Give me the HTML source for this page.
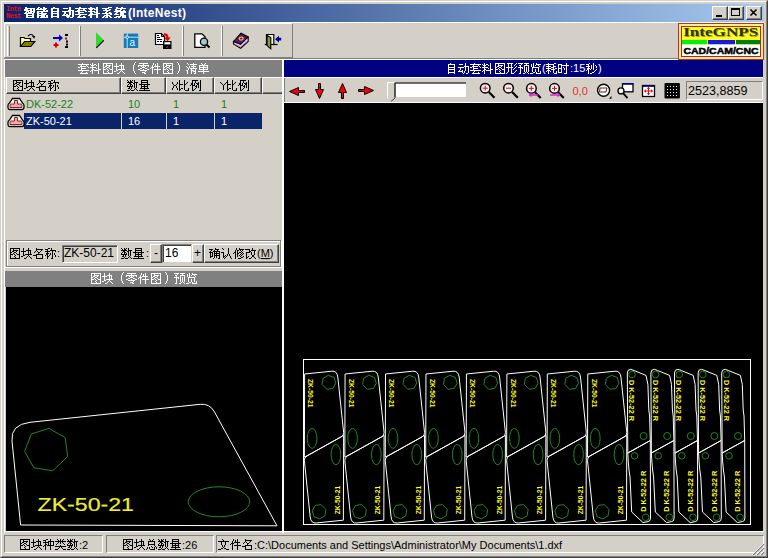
<!DOCTYPE html>
<html><head><meta charset="utf-8">
<style>
*{box-sizing:border-box;margin:0;padding:0}
html,body{width:768px;height:558px;overflow:hidden;background:#D4D0C8}
body{position:relative;font-family:"Liberation Sans",sans-serif;font-size:12px;color:#000}
.a{position:absolute}
.raised{border-top:1px solid #fff;border-left:1px solid #fff;border-right:1px solid #404040;border-bottom:1px solid #404040;box-shadow:inset -1px -1px 0 #808080}
.sunk{border-top:1px solid #808080;border-left:1px solid #808080;border-right:1px solid #fff;border-bottom:1px solid #fff;box-shadow:inset 1px 1px 0 #404040}
.t{white-space:nowrap;line-height:1}
svg{position:absolute;overflow:visible}
</style></head><body>
<!-- window frame -->
<div class="a" style="left:0;top:0;width:768px;height:558px;border-top:1px solid #D4D0C8;border-left:1px solid #D4D0C8;border-right:1px solid #404040;border-bottom:1px solid #404040;"></div>
<div class="a" style="left:1px;top:1px;width:766px;height:556px;border-top:1px solid #fff;border-left:1px solid #fff;border-right:1px solid #808080;border-bottom:1px solid #808080;"></div>

<!-- title bar -->
<div class="a" style="left:4px;top:4px;width:760px;height:18px;background:linear-gradient(to right,#0A246A,#A6CAF0)"></div>
<div class="a t" style="left:6px;top:6px;width:17px;height:14px;color:#E01020;font-family:'Liberation Mono',monospace;font-size:7px;line-height:7px;font-weight:bold;letter-spacing:-0.5px">Inte<br>Nest</div>
<div class="a raised" style="left:712px;top:6px;width:16px;height:14px;background:#D4D0C8"></div>
<div class="a" style="left:716px;top:15px;width:6px;height:2px;background:#000"></div>
<div class="a raised" style="left:728px;top:6px;width:16px;height:14px;background:#D4D0C8"></div>
<div class="a" style="left:731px;top:8px;width:9px;height:8px;border:1px solid #000;border-top-width:2px"></div>
<div class="a raised" style="left:746px;top:6px;width:16px;height:14px;background:#D4D0C8"></div>
<svg style="left:746px;top:6px" width="16" height="14"><path d="M4.5 3.5 L10.5 9.5 M10.5 3.5 L4.5 9.5" stroke="#000" stroke-width="1.6"/></svg>

<!-- toolbar -->
<div class="a" style="left:4px;top:22px;width:760px;height:1px;background:#fff"></div>
<div class="a" style="left:4px;top:23px;width:289px;height:35px;border-top:1px solid #fff;border-left:1px solid #fff;border-right:1px solid #808080;border-bottom:1px solid #808080"></div>
<div class="a" style="left:7px;top:26px;width:3px;height:30px;border-left:1px solid #fff;border-right:1px solid #808080"></div>
<div class="a" style="left:79px;top:26px;width:2px;height:30px;border-left:1px solid #fff;border-right:1px solid #808080"></div>
<div class="a" style="left:182px;top:26px;width:2px;height:30px;border-left:1px solid #fff;border-right:1px solid #808080"></div>
<div class="a" style="left:221px;top:26px;width:2px;height:30px;border-left:1px solid #fff;border-right:1px solid #808080"></div>
<div class="a" style="left:4px;top:58px;width:760px;height:1px;background:#808080"></div>
<div class="a" style="left:4px;top:59px;width:760px;height:1px;background:#fff"></div>
<div class="a" style="left:4px;top:59px;width:1px;height:474px;background:#fff"></div>

<!-- logo -->
<svg style="left:678px;top:23px" width="86" height="37" viewBox="0 0 86 37">
<rect x="0" y="0" width="86" height="37" fill="#FFF0A0"/>
<rect x="0.5" y="0.5" width="85" height="36" fill="none" stroke="#C83010" stroke-width="1"/>
<rect x="3.5" y="3.5" width="79" height="30" fill="#FFFF28" stroke="#C02010" stroke-width="1"/>
<text x="6" y="13.8" textLength="75" lengthAdjust="spacingAndGlyphs" style="font-family:'Liberation Serif',serif;font-weight:bold;font-size:11.5px;fill:#A0A000">InteGNPS</text>
<text x="5.2" y="13" textLength="75" lengthAdjust="spacingAndGlyphs" style="font-family:'Liberation Serif',serif;font-weight:bold;font-size:11.5px;fill:#303000">InteGNPS</text>
<rect x="4" y="17" width="25" height="4.5" fill="#00F000"/>
<rect x="30" y="17" width="27" height="4.5" fill="#1818E0"/>
<rect x="58" y="17" width="24" height="4.5" fill="#008000"/>
<rect x="4" y="21.5" width="78" height="11.5" fill="#fff"/>
<text x="5.5" y="31.3" textLength="75" lengthAdjust="spacingAndGlyphs" style="font-family:'Liberation Sans',sans-serif;font-weight:bold;font-size:9.6px;fill:#000;stroke:#000;stroke-width:0.5px">CAD/CAM/CNC</text>
</svg>
<!-- LEFT PANEL -->
<div class="a" style="left:5px;top:60px;width:277px;height:17px;background:#808080"></div>


<!-- list header -->
<div class="a" style="left:6px;top:77px;width:115px;height:17px;border-top:1px solid #fff;border-left:1px solid #fff;border-right:1px solid #404040;border-bottom:1px solid #404040;box-shadow:inset -1px -1px 0 #808080"></div>
<div class="a" style="left:121px;top:77px;width:45px;height:17px;border-top:1px solid #fff;border-left:1px solid #fff;border-right:1px solid #404040;border-bottom:1px solid #404040;box-shadow:inset -1px -1px 0 #808080"></div>
<div class="a" style="left:166px;top:77px;width:48px;height:17px;border-top:1px solid #fff;border-left:1px solid #fff;border-right:1px solid #404040;border-bottom:1px solid #404040;box-shadow:inset -1px -1px 0 #808080"></div>
<div class="a" style="left:214px;top:77px;width:48px;height:17px;border-top:1px solid #fff;border-left:1px solid #fff;border-right:1px solid #404040;border-bottom:1px solid #404040;box-shadow:inset -1px -1px 0 #808080"></div>
<div class="a" style="left:262px;top:77px;width:20px;height:17px;border-top:1px solid #fff;border-left:1px solid #fff;border-bottom:1px solid #404040;box-shadow:inset 0 -1px 0 #808080"></div>
<!-- rows -->
<div class="a t" style="left:26px;top:98px;line-height:13px;color:#208020;font-size:11px">DK-52-22</div>
<div class="a t" style="left:128px;top:98px;line-height:13px;color:#208020;font-size:11px">10</div>
<div class="a t" style="left:173px;top:98px;line-height:13px;color:#208020;font-size:11px">1</div>
<div class="a t" style="left:221px;top:98px;line-height:13px;color:#208020;font-size:11px">1</div>
<div class="a" style="left:24px;top:113px;width:97px;height:16px;background:#0A246A"></div>
<div class="a" style="left:122px;top:113px;width:44px;height:16px;background:#0A246A"></div>
<div class="a" style="left:167px;top:113px;width:47px;height:16px;background:#0A246A"></div>
<div class="a" style="left:215px;top:113px;width:47px;height:16px;background:#0A246A"></div>
<div class="a t" style="left:26px;top:115px;line-height:13px;color:#fff;font-size:11px">ZK-50-21</div>
<div class="a t" style="left:128px;top:115px;line-height:13px;color:#fff;font-size:11px">16</div>
<div class="a t" style="left:173px;top:115px;line-height:13px;color:#fff;font-size:11px">1</div>
<div class="a t" style="left:221px;top:115px;line-height:13px;color:#fff;font-size:11px">1</div>
<svg style="left:7px;top:97px" width="18" height="14"><path d="M5.5 1.5 H12.5 L15.5 6 Q17 6.8 17 8.8 V10 Q17 12.5 15 12.5 H3 Q1 12.5 1 10 V8.8 Q1 6.8 2.5 6 Z" fill="#fff" stroke="#000" stroke-width="1.3"/><path d="M7.5 3.5 H10.5 V7 H14.5 Q15 7.5 15 9 V10.5 H3 V9 Q3 7.5 3.5 7 H7.5 Z" fill="#F4A8A8" stroke="#600000" stroke-width="0.8"/></svg>
<svg style="left:7px;top:114px" width="18" height="14"><path d="M5.5 1.5 H12.5 L15.5 6 Q17 6.8 17 8.8 V10 Q17 12.5 15 12.5 H3 Q1 12.5 1 10 V8.8 Q1 6.8 2.5 6 Z" fill="#fff" stroke="#000" stroke-width="1.3"/><path d="M7.5 3.5 H10.5 V7 H14.5 Q15 7.5 15 9 V10.5 H3 V9 Q3 7.5 3.5 7 H7.5 Z" fill="#F4A8A8" stroke="#600000" stroke-width="0.8"/></svg>

<!-- form row -->
<div class="a" style="left:7px;top:241px;width:275px;height:27px;border:1px solid #fff"></div>
<div class="a" style="left:6px;top:240px;width:275px;height:27px;border:1px solid #808080"></div>
<div class="a" style="left:62px;top:245px;width:56px;height:18px;border-top:1px solid #808080;border-left:1px solid #808080;border-right:1px solid #fff;border-bottom:1px solid #fff;box-shadow:inset 1px 1px 0 #404040"></div>
<div class="a t" style="left:64px;top:247px;line-height:13px;font-size:12px">ZK-50-21</div>
<div class="a raised" style="left:150px;top:244px;width:12px;height:19px;background:#D4D0C8"></div>
<div class="a t" style="left:154px;top:247px;line-height:13px">-</div>
<div class="a" style="left:162px;top:244px;width:30px;height:19px;background:#fff;border-top:1px solid #808080;border-left:1px solid #808080;border-right:1px solid #D4D0C8;border-bottom:1px solid #D4D0C8;box-shadow:inset 1px 1px 0 #404040"></div>
<div class="a t" style="left:165px;top:247px;line-height:13px;font-size:12px">16</div>
<div class="a raised" style="left:192px;top:244px;width:12px;height:19px;background:#D4D0C8"></div>
<div class="a t" style="left:194px;top:247px;line-height:13px">+</div>
<div class="a raised" style="left:204px;top:244px;width:75px;height:19px;background:#D4D0C8"></div>


<!-- RIGHT PANEL -->
<div class="a" style="left:282px;top:59px;width:2px;height:474px;background:#fff"></div>
<div class="a" style="left:284px;top:60px;width:479px;height:17px;background:#000080"></div>
<div class="a" style="left:284px;top:77px;width:479px;height:1px;background:#fff"></div>
<div class="a" style="left:284px;top:102px;width:479px;height:1px;background:#fff"></div>
<div class="a" style="left:284px;top:103px;width:479px;height:428px;background:#000"></div>

<!-- left preview -->
<div class="a" style="left:5px;top:267px;width:277px;height:1px;background:#fff"></div>
<div class="a" style="left:5px;top:271px;width:277px;height:16px;background:#808080"></div>
<div class="a" style="left:6px;top:287px;width:276px;height:244px;background:#000"></div>


<svg style="left:0;top:0" width="768" height="558" viewBox="0 0 768 558">
<style>.nt{font-family:"Liberation Sans",sans-serif;font-weight:bold;font-size:7.2px;fill:#FFFF20;text-anchor:middle;dominant-baseline:central}</style>
<path d="M20.6 525 L12 441 Q10.3 424.7 30 422.3 L200.2 404.3 Q209.7 403.3 214.5 412 L277 525.8 Z" fill="none" stroke="#fff" stroke-width="1"/>
<path d="M48.9 428.4 L65.2 437.6 L67.7 456.5 L52.7 470.8 L33.9 467.8 L24.6 451.4 L31.4 433.9 Z" fill="none" stroke="#1E8A1E" stroke-width="1"/>
<ellipse cx="219" cy="501.8" rx="30.7" ry="15" fill="none" stroke="#1E8A1E" stroke-width="1"/>
<text x="37.5" y="510.9" textLength="96.5" lengthAdjust="spacingAndGlyphs" style="font-family:'Liberation Sans',sans-serif;font-size:19.2px;fill:#F0F028;stroke:#F0F028;stroke-width:0.15px">ZK-50-21</text>
<rect x="303.5" y="359.5" width="447" height="165" fill="none" stroke="#fff" stroke-width="1"/>
<g transform="matrix(0,0.3245,-0.323,0,474.20,367.31)"><path d="M20.6 525 L12 441 Q10.3 424.7 30 422.3 L200.2 404.3 Q209.7 403.3 214.5 412 L277 525.8 Z" fill="none" stroke="#fff" stroke-width="1" vector-effect="non-scaling-stroke"/><path d="M48.9 428.4 L65.2 437.6 L67.7 456.5 L52.7 470.8 L33.9 467.8 L24.6 451.4 L31.4 433.9 Z" fill="none" stroke="#1E8A1E" stroke-width="1" vector-effect="non-scaling-stroke"/><ellipse cx="219" cy="501.8" rx="30.7" ry="15" fill="none" stroke="#1E8A1E" stroke-width="1" vector-effect="non-scaling-stroke"/></g>
<g transform="matrix(0,-0.3306,0.323,0,173.80,526.97)"><path d="M20.6 525 L12 441 Q10.3 424.7 30 422.3 L200.2 404.3 Q209.7 403.3 214.5 412 L277 525.8 Z" fill="none" stroke="#fff" stroke-width="1" vector-effect="non-scaling-stroke"/><path d="M48.9 428.4 L65.2 437.6 L67.7 456.5 L52.7 470.8 L33.9 467.8 L24.6 451.4 L31.4 433.9 Z" fill="none" stroke="#1E8A1E" stroke-width="1" vector-effect="non-scaling-stroke"/><ellipse cx="219" cy="501.8" rx="30.7" ry="15" fill="none" stroke="#1E8A1E" stroke-width="1" vector-effect="non-scaling-stroke"/></g>
<text transform="translate(310.90,393.2) rotate(90)" class="nt" textLength="28.5" lengthAdjust="spacingAndGlyphs">ZK-50-21</text>
<text transform="translate(337.30,500) rotate(-90)" class="nt" textLength="28.5" lengthAdjust="spacingAndGlyphs">ZK-50-21</text>
<g transform="matrix(0,0.3245,-0.323,0,514.65,367.31)"><path d="M20.6 525 L12 441 Q10.3 424.7 30 422.3 L200.2 404.3 Q209.7 403.3 214.5 412 L277 525.8 Z" fill="none" stroke="#fff" stroke-width="1" vector-effect="non-scaling-stroke"/><path d="M48.9 428.4 L65.2 437.6 L67.7 456.5 L52.7 470.8 L33.9 467.8 L24.6 451.4 L31.4 433.9 Z" fill="none" stroke="#1E8A1E" stroke-width="1" vector-effect="non-scaling-stroke"/><ellipse cx="219" cy="501.8" rx="30.7" ry="15" fill="none" stroke="#1E8A1E" stroke-width="1" vector-effect="non-scaling-stroke"/></g>
<g transform="matrix(0,-0.3306,0.323,0,214.25,526.97)"><path d="M20.6 525 L12 441 Q10.3 424.7 30 422.3 L200.2 404.3 Q209.7 403.3 214.5 412 L277 525.8 Z" fill="none" stroke="#fff" stroke-width="1" vector-effect="non-scaling-stroke"/><path d="M48.9 428.4 L65.2 437.6 L67.7 456.5 L52.7 470.8 L33.9 467.8 L24.6 451.4 L31.4 433.9 Z" fill="none" stroke="#1E8A1E" stroke-width="1" vector-effect="non-scaling-stroke"/><ellipse cx="219" cy="501.8" rx="30.7" ry="15" fill="none" stroke="#1E8A1E" stroke-width="1" vector-effect="non-scaling-stroke"/></g>
<text transform="translate(351.35,393.2) rotate(90)" class="nt" textLength="28.5" lengthAdjust="spacingAndGlyphs">ZK-50-21</text>
<text transform="translate(377.75,500) rotate(-90)" class="nt" textLength="28.5" lengthAdjust="spacingAndGlyphs">ZK-50-21</text>
<g transform="matrix(0,0.3245,-0.323,0,555.10,367.31)"><path d="M20.6 525 L12 441 Q10.3 424.7 30 422.3 L200.2 404.3 Q209.7 403.3 214.5 412 L277 525.8 Z" fill="none" stroke="#fff" stroke-width="1" vector-effect="non-scaling-stroke"/><path d="M48.9 428.4 L65.2 437.6 L67.7 456.5 L52.7 470.8 L33.9 467.8 L24.6 451.4 L31.4 433.9 Z" fill="none" stroke="#1E8A1E" stroke-width="1" vector-effect="non-scaling-stroke"/><ellipse cx="219" cy="501.8" rx="30.7" ry="15" fill="none" stroke="#1E8A1E" stroke-width="1" vector-effect="non-scaling-stroke"/></g>
<g transform="matrix(0,-0.3306,0.323,0,254.70,526.97)"><path d="M20.6 525 L12 441 Q10.3 424.7 30 422.3 L200.2 404.3 Q209.7 403.3 214.5 412 L277 525.8 Z" fill="none" stroke="#fff" stroke-width="1" vector-effect="non-scaling-stroke"/><path d="M48.9 428.4 L65.2 437.6 L67.7 456.5 L52.7 470.8 L33.9 467.8 L24.6 451.4 L31.4 433.9 Z" fill="none" stroke="#1E8A1E" stroke-width="1" vector-effect="non-scaling-stroke"/><ellipse cx="219" cy="501.8" rx="30.7" ry="15" fill="none" stroke="#1E8A1E" stroke-width="1" vector-effect="non-scaling-stroke"/></g>
<text transform="translate(391.80,393.2) rotate(90)" class="nt" textLength="28.5" lengthAdjust="spacingAndGlyphs">ZK-50-21</text>
<text transform="translate(418.20,500) rotate(-90)" class="nt" textLength="28.5" lengthAdjust="spacingAndGlyphs">ZK-50-21</text>
<g transform="matrix(0,0.3245,-0.323,0,595.55,367.31)"><path d="M20.6 525 L12 441 Q10.3 424.7 30 422.3 L200.2 404.3 Q209.7 403.3 214.5 412 L277 525.8 Z" fill="none" stroke="#fff" stroke-width="1" vector-effect="non-scaling-stroke"/><path d="M48.9 428.4 L65.2 437.6 L67.7 456.5 L52.7 470.8 L33.9 467.8 L24.6 451.4 L31.4 433.9 Z" fill="none" stroke="#1E8A1E" stroke-width="1" vector-effect="non-scaling-stroke"/><ellipse cx="219" cy="501.8" rx="30.7" ry="15" fill="none" stroke="#1E8A1E" stroke-width="1" vector-effect="non-scaling-stroke"/></g>
<g transform="matrix(0,-0.3306,0.323,0,295.15,526.97)"><path d="M20.6 525 L12 441 Q10.3 424.7 30 422.3 L200.2 404.3 Q209.7 403.3 214.5 412 L277 525.8 Z" fill="none" stroke="#fff" stroke-width="1" vector-effect="non-scaling-stroke"/><path d="M48.9 428.4 L65.2 437.6 L67.7 456.5 L52.7 470.8 L33.9 467.8 L24.6 451.4 L31.4 433.9 Z" fill="none" stroke="#1E8A1E" stroke-width="1" vector-effect="non-scaling-stroke"/><ellipse cx="219" cy="501.8" rx="30.7" ry="15" fill="none" stroke="#1E8A1E" stroke-width="1" vector-effect="non-scaling-stroke"/></g>
<text transform="translate(432.25,393.2) rotate(90)" class="nt" textLength="28.5" lengthAdjust="spacingAndGlyphs">ZK-50-21</text>
<text transform="translate(458.65,500) rotate(-90)" class="nt" textLength="28.5" lengthAdjust="spacingAndGlyphs">ZK-50-21</text>
<g transform="matrix(0,0.3245,-0.323,0,636.00,367.31)"><path d="M20.6 525 L12 441 Q10.3 424.7 30 422.3 L200.2 404.3 Q209.7 403.3 214.5 412 L277 525.8 Z" fill="none" stroke="#fff" stroke-width="1" vector-effect="non-scaling-stroke"/><path d="M48.9 428.4 L65.2 437.6 L67.7 456.5 L52.7 470.8 L33.9 467.8 L24.6 451.4 L31.4 433.9 Z" fill="none" stroke="#1E8A1E" stroke-width="1" vector-effect="non-scaling-stroke"/><ellipse cx="219" cy="501.8" rx="30.7" ry="15" fill="none" stroke="#1E8A1E" stroke-width="1" vector-effect="non-scaling-stroke"/></g>
<g transform="matrix(0,-0.3306,0.323,0,335.60,526.97)"><path d="M20.6 525 L12 441 Q10.3 424.7 30 422.3 L200.2 404.3 Q209.7 403.3 214.5 412 L277 525.8 Z" fill="none" stroke="#fff" stroke-width="1" vector-effect="non-scaling-stroke"/><path d="M48.9 428.4 L65.2 437.6 L67.7 456.5 L52.7 470.8 L33.9 467.8 L24.6 451.4 L31.4 433.9 Z" fill="none" stroke="#1E8A1E" stroke-width="1" vector-effect="non-scaling-stroke"/><ellipse cx="219" cy="501.8" rx="30.7" ry="15" fill="none" stroke="#1E8A1E" stroke-width="1" vector-effect="non-scaling-stroke"/></g>
<text transform="translate(472.70,393.2) rotate(90)" class="nt" textLength="28.5" lengthAdjust="spacingAndGlyphs">ZK-50-21</text>
<text transform="translate(499.10,500) rotate(-90)" class="nt" textLength="28.5" lengthAdjust="spacingAndGlyphs">ZK-50-21</text>
<g transform="matrix(0,0.3245,-0.323,0,676.45,367.31)"><path d="M20.6 525 L12 441 Q10.3 424.7 30 422.3 L200.2 404.3 Q209.7 403.3 214.5 412 L277 525.8 Z" fill="none" stroke="#fff" stroke-width="1" vector-effect="non-scaling-stroke"/><path d="M48.9 428.4 L65.2 437.6 L67.7 456.5 L52.7 470.8 L33.9 467.8 L24.6 451.4 L31.4 433.9 Z" fill="none" stroke="#1E8A1E" stroke-width="1" vector-effect="non-scaling-stroke"/><ellipse cx="219" cy="501.8" rx="30.7" ry="15" fill="none" stroke="#1E8A1E" stroke-width="1" vector-effect="non-scaling-stroke"/></g>
<g transform="matrix(0,-0.3306,0.323,0,376.05,526.97)"><path d="M20.6 525 L12 441 Q10.3 424.7 30 422.3 L200.2 404.3 Q209.7 403.3 214.5 412 L277 525.8 Z" fill="none" stroke="#fff" stroke-width="1" vector-effect="non-scaling-stroke"/><path d="M48.9 428.4 L65.2 437.6 L67.7 456.5 L52.7 470.8 L33.9 467.8 L24.6 451.4 L31.4 433.9 Z" fill="none" stroke="#1E8A1E" stroke-width="1" vector-effect="non-scaling-stroke"/><ellipse cx="219" cy="501.8" rx="30.7" ry="15" fill="none" stroke="#1E8A1E" stroke-width="1" vector-effect="non-scaling-stroke"/></g>
<text transform="translate(513.15,393.2) rotate(90)" class="nt" textLength="28.5" lengthAdjust="spacingAndGlyphs">ZK-50-21</text>
<text transform="translate(539.55,500) rotate(-90)" class="nt" textLength="28.5" lengthAdjust="spacingAndGlyphs">ZK-50-21</text>
<g transform="matrix(0,0.3245,-0.323,0,716.90,367.31)"><path d="M20.6 525 L12 441 Q10.3 424.7 30 422.3 L200.2 404.3 Q209.7 403.3 214.5 412 L277 525.8 Z" fill="none" stroke="#fff" stroke-width="1" vector-effect="non-scaling-stroke"/><path d="M48.9 428.4 L65.2 437.6 L67.7 456.5 L52.7 470.8 L33.9 467.8 L24.6 451.4 L31.4 433.9 Z" fill="none" stroke="#1E8A1E" stroke-width="1" vector-effect="non-scaling-stroke"/><ellipse cx="219" cy="501.8" rx="30.7" ry="15" fill="none" stroke="#1E8A1E" stroke-width="1" vector-effect="non-scaling-stroke"/></g>
<g transform="matrix(0,-0.3306,0.323,0,416.50,526.97)"><path d="M20.6 525 L12 441 Q10.3 424.7 30 422.3 L200.2 404.3 Q209.7 403.3 214.5 412 L277 525.8 Z" fill="none" stroke="#fff" stroke-width="1" vector-effect="non-scaling-stroke"/><path d="M48.9 428.4 L65.2 437.6 L67.7 456.5 L52.7 470.8 L33.9 467.8 L24.6 451.4 L31.4 433.9 Z" fill="none" stroke="#1E8A1E" stroke-width="1" vector-effect="non-scaling-stroke"/><ellipse cx="219" cy="501.8" rx="30.7" ry="15" fill="none" stroke="#1E8A1E" stroke-width="1" vector-effect="non-scaling-stroke"/></g>
<text transform="translate(553.60,393.2) rotate(90)" class="nt" textLength="28.5" lengthAdjust="spacingAndGlyphs">ZK-50-21</text>
<text transform="translate(580.00,500) rotate(-90)" class="nt" textLength="28.5" lengthAdjust="spacingAndGlyphs">ZK-50-21</text>
<g transform="matrix(0,0.3245,-0.323,0,757.35,367.31)"><path d="M20.6 525 L12 441 Q10.3 424.7 30 422.3 L200.2 404.3 Q209.7 403.3 214.5 412 L277 525.8 Z" fill="none" stroke="#fff" stroke-width="1" vector-effect="non-scaling-stroke"/><path d="M48.9 428.4 L65.2 437.6 L67.7 456.5 L52.7 470.8 L33.9 467.8 L24.6 451.4 L31.4 433.9 Z" fill="none" stroke="#1E8A1E" stroke-width="1" vector-effect="non-scaling-stroke"/><ellipse cx="219" cy="501.8" rx="30.7" ry="15" fill="none" stroke="#1E8A1E" stroke-width="1" vector-effect="non-scaling-stroke"/></g>
<g transform="matrix(0,-0.3306,0.323,0,456.95,526.97)"><path d="M20.6 525 L12 441 Q10.3 424.7 30 422.3 L200.2 404.3 Q209.7 403.3 214.5 412 L277 525.8 Z" fill="none" stroke="#fff" stroke-width="1" vector-effect="non-scaling-stroke"/><path d="M48.9 428.4 L65.2 437.6 L67.7 456.5 L52.7 470.8 L33.9 467.8 L24.6 451.4 L31.4 433.9 Z" fill="none" stroke="#1E8A1E" stroke-width="1" vector-effect="non-scaling-stroke"/><ellipse cx="219" cy="501.8" rx="30.7" ry="15" fill="none" stroke="#1E8A1E" stroke-width="1" vector-effect="non-scaling-stroke"/></g>
<text transform="translate(594.05,393.2) rotate(90)" class="nt" textLength="28.5" lengthAdjust="spacingAndGlyphs">ZK-50-21</text>
<text transform="translate(620.45,500) rotate(-90)" class="nt" textLength="28.5" lengthAdjust="spacingAndGlyphs">ZK-50-21</text>
<path d="M627.3 373 Q627.3 369.3 630.8 369.3 L634.0 370.5 L646.0 375.4 L647.9 384.4 L648.8 410 L649.6 416 L650.3 440.5 L627.8 453.0 Z" fill="none" stroke="#fff" stroke-width="1"/><path d="M627.8 453.0 L650.3 440.5 L650.5 518 Q650.5 521.4 648.0 521.6 L643.0 522.6 L631.7 512 L630.0 477 L629.0 470 L628.3 462 Z" fill="none" stroke="#fff" stroke-width="1"/>
<circle cx="632.0" cy="374.5" r="3.3" fill="none" stroke="#1E8A1E"/><circle cx="643.6" cy="436" r="3.5" fill="none" stroke="#1E8A1E"/>
<circle cx="634.6" cy="455.8" r="3.3" fill="none" stroke="#1E8A1E"/><circle cx="645.7" cy="517.3" r="3.3" fill="none" stroke="#1E8A1E"/>
<text transform="translate(631.70,400.5) rotate(90)" class="nt" textLength="41" lengthAdjust="spacingAndGlyphs">D K-52-22 R</text>
<text transform="translate(643.30,491.3) rotate(-90)" class="nt" textLength="41" lengthAdjust="spacingAndGlyphs">D K-52-22 R</text>
<path d="M650.9 373 Q650.9 369.3 654.4 369.3 L657.6 370.5 L669.6 375.4 L671.5 384.4 L672.4 410 L673.2 416 L673.9 440.5 L651.4 453.0 Z" fill="none" stroke="#fff" stroke-width="1"/><path d="M651.4 453.0 L673.9 440.5 L674.1 518 Q674.1 521.4 671.6 521.6 L666.6 522.6 L655.3 512 L653.6 477 L652.6 470 L651.9 462 Z" fill="none" stroke="#fff" stroke-width="1"/>
<circle cx="655.6" cy="374.5" r="3.3" fill="none" stroke="#1E8A1E"/><circle cx="667.2" cy="436" r="3.5" fill="none" stroke="#1E8A1E"/>
<circle cx="658.2" cy="455.8" r="3.3" fill="none" stroke="#1E8A1E"/><circle cx="669.3" cy="517.3" r="3.3" fill="none" stroke="#1E8A1E"/>
<text transform="translate(655.30,400.5) rotate(90)" class="nt" textLength="41" lengthAdjust="spacingAndGlyphs">D K-52-22 R</text>
<text transform="translate(666.90,491.3) rotate(-90)" class="nt" textLength="41" lengthAdjust="spacingAndGlyphs">D K-52-22 R</text>
<path d="M674.5 373 Q674.5 369.3 678.0 369.3 L681.2 370.5 L693.2 375.4 L695.1 384.4 L696.0 410 L696.8 416 L697.5 440.5 L675.0 453.0 Z" fill="none" stroke="#fff" stroke-width="1"/><path d="M675.0 453.0 L697.5 440.5 L697.7 518 Q697.7 521.4 695.2 521.6 L690.2 522.6 L678.9 512 L677.2 477 L676.2 470 L675.5 462 Z" fill="none" stroke="#fff" stroke-width="1"/>
<circle cx="679.2" cy="374.5" r="3.3" fill="none" stroke="#1E8A1E"/><circle cx="690.8" cy="436" r="3.5" fill="none" stroke="#1E8A1E"/>
<circle cx="681.8" cy="455.8" r="3.3" fill="none" stroke="#1E8A1E"/><circle cx="692.9" cy="517.3" r="3.3" fill="none" stroke="#1E8A1E"/>
<text transform="translate(678.90,400.5) rotate(90)" class="nt" textLength="41" lengthAdjust="spacingAndGlyphs">D K-52-22 R</text>
<text transform="translate(690.50,491.3) rotate(-90)" class="nt" textLength="41" lengthAdjust="spacingAndGlyphs">D K-52-22 R</text>
<path d="M698.1 373 Q698.1 369.3 701.6 369.3 L704.8 370.5 L716.8 375.4 L718.7 384.4 L719.6 410 L720.4 416 L721.1 440.5 L698.6 453.0 Z" fill="none" stroke="#fff" stroke-width="1"/><path d="M698.6 453.0 L721.1 440.5 L721.3 518 Q721.3 521.4 718.8 521.6 L713.8 522.6 L702.5 512 L700.8 477 L699.8 470 L699.1 462 Z" fill="none" stroke="#fff" stroke-width="1"/>
<circle cx="702.8" cy="374.5" r="3.3" fill="none" stroke="#1E8A1E"/><circle cx="714.4" cy="436" r="3.5" fill="none" stroke="#1E8A1E"/>
<circle cx="705.4" cy="455.8" r="3.3" fill="none" stroke="#1E8A1E"/><circle cx="716.5" cy="517.3" r="3.3" fill="none" stroke="#1E8A1E"/>
<text transform="translate(702.50,400.5) rotate(90)" class="nt" textLength="41" lengthAdjust="spacingAndGlyphs">D K-52-22 R</text>
<text transform="translate(714.10,491.3) rotate(-90)" class="nt" textLength="41" lengthAdjust="spacingAndGlyphs">D K-52-22 R</text>
<path d="M721.7 373 Q721.7 369.3 725.2 369.3 L728.4 370.5 L740.4 375.4 L742.3 384.4 L743.2 410 L744.0 416 L744.7 440.5 L722.2 453.0 Z" fill="none" stroke="#fff" stroke-width="1"/><path d="M722.2 453.0 L744.7 440.5 L744.9 518 Q744.9 521.4 742.4 521.6 L737.4 522.6 L726.1 512 L724.4 477 L723.4 470 L722.7 462 Z" fill="none" stroke="#fff" stroke-width="1"/>
<circle cx="726.4" cy="374.5" r="3.3" fill="none" stroke="#1E8A1E"/><circle cx="738.0" cy="436" r="3.5" fill="none" stroke="#1E8A1E"/>
<circle cx="729.0" cy="455.8" r="3.3" fill="none" stroke="#1E8A1E"/><circle cx="740.1" cy="517.3" r="3.3" fill="none" stroke="#1E8A1E"/>
<text transform="translate(726.10,400.5) rotate(90)" class="nt" textLength="41" lengthAdjust="spacingAndGlyphs">D K-52-22 R</text>
<text transform="translate(737.70,491.3) rotate(-90)" class="nt" textLength="41" lengthAdjust="spacingAndGlyphs">D K-52-22 R</text>
</svg>


<svg style="left:0;top:0" width="768" height="110" viewBox="0 0 768 110">
<!-- open folder -->
<path d="M20.5 46.5 V37.5 H24 L25 38.5 H30.5 V41.5" fill="#FFFF99" stroke="#000" stroke-width="1.2"/>
<path d="M20.5 46.5 L24.5 41.5 H34.8 L30.8 46.5 Z" fill="#808000" stroke="#000" stroke-width="1.2"/>
<path d="M28 36.2 Q30.5 33 33.5 35.8" fill="none" stroke="#000" stroke-width="1.1"/>
<path d="M32 36 L35.2 36 L34.2 38.8 Z" fill="#000"/>
<!-- merge -->
<rect x="53" y="37" width="7" height="2" fill="#0000C8"/>
<path d="M59 34.5 L63 38 L59 41.5 Z" fill="#0000C8"/>
<rect x="53.5" y="44" width="5" height="2" fill="#E00000"/><rect x="55" y="42.5" width="2" height="5" fill="#E00000"/>
<rect x="65" y="34" width="3" height="2" fill="#000"/><rect x="65" y="37.5" width="2" height="2" fill="#802020"/>
<rect x="66" y="40.5" width="2" height="2" fill="#000"/><rect x="66" y="43.5" width="2" height="2" fill="#000"/>
<rect x="65" y="46" width="3" height="2" fill="#000"/>
<!-- play -->
<path d="M96 32.3 L104 40.3 L96 48 Z" fill="#30DC30"/>
<path d="M96.3 47.8 L103.8 40.3" stroke="#000" stroke-width="1.2"/>
<!-- blue a -->
<rect x="123.8" y="33.6" width="14.4" height="14.4" fill="#1878B8"/>
<path d="M127.2 33.6 V48 M123.8 37.2 H138.2" stroke="#A0F0FF" stroke-width="1"/>
<circle cx="127.2" cy="37.2" r="1.3" fill="#1878B8" stroke="#E0FFFF" stroke-width="0.9"/>
<text x="129.6" y="46.3" style="font-family:'Liberation Sans',sans-serif;font-size:10px;fill:#E8F8FF">a</text>
<!-- save -->
<path d="M155.5 33.5 H161.5 L164.5 36.5 V44.5 H155.5 Z" fill="#fff" stroke="#000" stroke-width="1.2"/>
<path d="M161.5 33.5 V36.5 H164.5" fill="none" stroke="#000" stroke-width="1"/>
<g fill="#000"><rect x="157" y="35" width="2" height="1"/><rect x="157" y="37" width="3" height="1"/><rect x="157" y="39" width="5" height="1"/><rect x="157" y="41" width="2" height="1"/><rect x="160" y="41" width="2" height="1"/></g>
<path d="M164 33.2 Q168.5 33 168.5 37.5 H170.8 L167.5 41.2 L164.2 37.5 H166.3 Q166.3 35.3 164 35.3 Z" fill="#E80000"/>
<rect x="163" y="41" width="8.5" height="8" fill="#000"/>
<rect x="164.3" y="42.2" width="6" height="2.2" fill="#fff"/>
<rect x="166.3" y="46.2" width="2" height="1.8" fill="#404040"/>
<!-- doc mag -->
<path d="M194.8 33.8 H202 L205 36.8 V47.3 H194.8 Z" fill="#fff" stroke="#000" stroke-width="1.3"/>
<circle cx="204" cy="41.8" r="3.6" fill="#A0CCC8" stroke="#000" stroke-width="1.3"/>
<path d="M206.6 44.6 L209.5 47.5" stroke="#000" stroke-width="2"/>
<!-- book -->
<path d="M233.5 41.5 V44 L240.6 48.2 L248.2 41.5 V37.5 Z" fill="#F0C8F0" stroke="#000" stroke-width="1.1"/>
<path d="M233.5 41.5 L241 33.2 L248.2 37 L240.6 44.3 Z" fill="#5C1470" stroke="#000" stroke-width="1.1"/>
<path d="M234.5 44 L240.6 47 L247.5 41" fill="none" stroke="#A070B0" stroke-width="0.8"/>
<ellipse cx="241.2" cy="38.6" rx="2" ry="1.5" fill="none" stroke="#F0C030" stroke-width="1.3"/>
<!-- door -->
<path d="M266.5 44.5 V34.5 H273.8 V44.5" fill="#F4F4E0" stroke="#000" stroke-width="1.2"/>
<path d="M264.8 44.5 H277.5" stroke="#000" stroke-width="1.2"/>
<path d="M267 35.5 L270.8 37.5 V48.8 L267 45.5 Z" fill="#8C9830" stroke="#000" stroke-width="1.1"/>
<path d="M275 39.2 L279 35.8 V37.8 H281.2 V40.6 H279 V42.6 Z" fill="#0000A0"/>
<!-- right toolbar arrows -->
<g fill="#F00010" stroke="#000" stroke-width="1" stroke-linejoin="miter">
<path d="M289.5 91.5 L298.5 87.5 V90.5 H304.5 V92.5 H298.5 V95.5 Z"/>
<path d="M315.5 89.5 H318.5 V83.5 H320.5 V89.5 H323.5 L319.5 98.5 Z"/>
<path d="M342.5 83.5 L346.5 92.5 H343.5 V98.5 H341.5 V92.5 H338.5 Z"/>
<path d="M373.5 90.5 L364.5 86.5 V89.5 H358.5 V91.5 H364.5 V94.5 Z"/>
</g>
<!-- slider -->
<rect x="394.5" y="82.5" width="72" height="15" fill="#fff" stroke="#D4D0C8" stroke-width="1"/>
<path d="M395 97 V83 H466" fill="none" stroke="#404040" stroke-width="1.4"/>
<path d="M387.5 98.5 V82.5 H394.5" fill="none" stroke="#fff" stroke-width="1"/>
<path d="M391 101.5 L395 98 V83" fill="none" stroke="#404040" stroke-width="1"/>
<!-- zooms -->
<g id="zm"><circle cx="485.2" cy="88.2" r="4.8" fill="#F8ECEC" stroke="#000" stroke-width="1.5"/>
<path d="M482.7 88.2 h5 M485.2 85.7 v5" stroke="#D01040" stroke-width="1"/>
<path d="M488.8 92 L494.5 97.8" stroke="#000" stroke-width="2.2"/></g>
<circle cx="508.5" cy="88.2" r="4.8" fill="#F8ECEC" stroke="#000" stroke-width="1.5"/>
<path d="M506 88.2 h5" stroke="#D01040" stroke-width="1"/>
<path d="M512.1 92 L517.8 97.8" stroke="#000" stroke-width="2.2"/>
<circle cx="531.4" cy="88.4" r="4.8" fill="#F8ECEC" stroke="#000" stroke-width="1.5"/>
<path d="M528.9 88.4 h5 M531.4 85.9 v5" stroke="#E01020" stroke-width="1"/>
<path d="M535 92.2 L540.7 98" stroke="#000" stroke-width="2.2"/>
<path d="M529 95 H538 M529 95 L531.5 93.5 M529 95 L531.5 96.5" stroke="#E020E0" stroke-width="1.3"/>
<circle cx="554.5" cy="88.4" r="4.8" fill="#F8ECEC" stroke="#000" stroke-width="1.5"/>
<path d="M552 88.4 h5 M554.5 85.9 v5" stroke="#E01020" stroke-width="1"/>
<path d="M558.1 92.2 L563.8 98" stroke="#000" stroke-width="2.2"/>
<path d="M550 95 H560 M560 95 L557.5 93.5 M560 95 L557.5 96.5" stroke="#E020E0" stroke-width="1.3"/>
<text x="572.5" y="94.5" style="font-family:'Liberation Sans',sans-serif;font-size:11px;fill:#E03030">0,0</text>
<!-- circle icon -->
<circle cx="603.6" cy="90.2" r="6" fill="#fff" stroke="#000" stroke-width="1.4"/>
<path d="M600 88 H607 L606 92 H599.5 Z" fill="none" stroke="#602020" stroke-width="1"/>
<path d="M609 98.8 L611.5 96 V98.8 Z" fill="#000"/>
<!-- window mag -->
<rect x="622.5" y="83.8" width="10.5" height="8" fill="#fff" stroke="#000" stroke-width="1.3"/>
<path d="M622 83.8 H633.5" stroke="#000080" stroke-width="1.5"/>
<circle cx="621" cy="90.9" r="3" fill="#F4F4F4" stroke="#000" stroke-width="1.3"/>
<path d="M623.2 93.2 L627.5 98.2" stroke="#000" stroke-width="1.8"/>
<!-- box cross -->
<rect x="642.5" y="85.5" width="12" height="11" fill="#fff" stroke="#000" stroke-width="1.3"/>
<path d="M642 86 H655" stroke="#000060" stroke-width="1.6"/>
<path d="M644.5 91 H652.5 M648.5 87 V95" stroke="#D01020" stroke-width="1"/>
<path d="M644 91 L646 89.3 V92.7 Z M653 91 L651 89.3 V92.7 Z M648.5 86.8 L646.8 88.8 H650.2 Z M648.5 95.2 L646.8 93.2 H650.2 Z" fill="#D01020"/>
<!-- grid -->
<rect x="664.5" y="83" width="15.4" height="15.6" rx="1" fill="#000"/>
<g fill="#fff">
<rect x="667" y="86" width="1" height="1"/><rect x="670" y="86" width="1" height="1"/><rect x="673" y="86" width="1" height="1"/><rect x="676" y="86" width="1" height="1"/>
<rect x="667" y="89" width="1" height="1"/><rect x="670" y="89" width="1" height="1"/><rect x="673" y="89" width="1" height="1"/><rect x="676" y="89" width="1" height="1"/>
<rect x="667" y="92" width="1" height="1"/><rect x="670" y="92" width="1" height="1"/><rect x="673" y="92" width="1" height="1"/><rect x="676" y="92" width="1" height="1"/>
<rect x="667" y="95" width="1" height="1"/><rect x="670" y="95" width="1" height="1"/><rect x="673" y="95" width="1" height="1"/><rect x="676" y="95" width="1" height="1"/>
</g>
</svg>
<div class="a" style="left:686px;top:81px;width:77px;height:19px;border-top:1px solid #808080;border-left:1px solid #808080;border-right:1px solid #fff;border-bottom:1px solid #fff;background:#D4D0C8"></div>
<div class="a t" style="left:688px;top:85px;font-size:12.6px;line-height:12px">2523,8859</div>

<!-- status bar -->
<div class="a" style="left:4px;top:531px;width:760px;height:1px;background:#fff"></div>
<div class="a" style="left:4px;top:535px;width:99px;height:18px;border-top:1px solid #808080;border-left:1px solid #808080;border-right:1px solid #fff;border-bottom:1px solid #fff"></div>
<div class="a" style="left:106px;top:535px;width:108px;height:18px;border-top:1px solid #808080;border-left:1px solid #808080;border-right:1px solid #fff;border-bottom:1px solid #fff"></div>
<div class="a" style="left:216px;top:535px;width:548px;height:18px;border-top:1px solid #808080;border-left:1px solid #808080;border-right:1px solid #fff;border-bottom:1px solid #fff"></div>

<svg style="left:750px;top:541px" width="15" height="15"><path d="M3 14 L14 3 M7 14 L14 7 M11 14 L14 11" stroke="#808080" stroke-width="1.4"/><path d="M2 14 L14 2 M6 14 L14 6 M10 14 L14 10" stroke="#fff" stroke-width="0.8"/></svg>
<div class="a" style="left:284px;top:78px;width:1px;height:24px;background:#808080"></div>
<!--TXT-->
<svg style="left:0;top:0" width="768" height="558" viewBox="0 0 768 558" shape-rendering="crispEdges"><g style="font-family:'Liberation Sans',sans-serif;font-size:11px">
<text x="128" y="17" textLength="58" lengthAdjust="spacing" style="font-weight:bold;font-size:12px;fill:#fff">(InteNest)</text>
<text x="542" y="72" style="fill:#fff">(</text>
<text x="570" y="72" style="fill:#fff">:15</text>
<text x="598" y="72" style="fill:#fff">)</text>
<text x="57" y="257" style="fill:#000">:</text>
<text x="146" y="257" style="fill:#000">:</text>
<text x="257" y="257" style="fill:#000">(<tspan text-decoration="underline">M</tspan>)</text>
<text x="79" y="549" style="fill:#000">:2</text>
<text x="182" y="549" style="fill:#000">:26</text>
<text x="254" y="549" style="fill:#000">:C:\Documents and Settings\Administrator\My Documents\1.dxf</text>
</g>
<path fill="#fff" d="M25 7h2v1h-2zM25 8h10v1h-10zM24 9h4v1h-4zM30 9h2v1h-2zM33 9h2v1h-2zM24 10h8v1h-8zM33 10h2v1h-2zM26 11h3v1h-3zM30 11h5v1h-5zM25 12h2v1h-2zM28 12h4v1h-4zM33 12h2v1h-2zM24 13h10v1h-10zM26 14h2v1h-2zM32 14h2v1h-2zM26 15h8v1h-8zM26 16h2v1h-2zM32 16h2v1h-2zM26 17h8v1h-8zM38 7h2v1h-2zM43 7h2v1h-2zM37 8h2v1h-2zM40 8h2v1h-2zM43 8h4v1h-4zM36 9h10v1h-10zM43 10h2v1h-2zM46 10h2v1h-2zM37 11h11v1h-11zM37 12h2v1h-2zM41 12h2v1h-2zM37 13h10v1h-10zM37 14h2v1h-2zM41 14h5v1h-5zM37 15h8v1h-8zM46 15h2v1h-2zM37 16h2v1h-2zM41 16h4v1h-4zM46 16h2v1h-2zM37 17h2v1h-2zM40 17h8v1h-8zM53 7h2v1h-2zM51 8h8v1h-8zM51 9h2v1h-2zM57 9h2v1h-2zM51 10h2v1h-2zM57 10h2v1h-2zM51 11h8v1h-8zM51 12h2v1h-2zM57 12h2v1h-2zM51 13h8v1h-8zM51 14h2v1h-2zM57 14h2v1h-2zM51 15h2v1h-2zM57 15h2v1h-2zM51 16h8v1h-8zM51 17h2v1h-2zM57 17h2v1h-2zM69 7h2v1h-2zM63 8h5v1h-5zM69 8h2v1h-2zM69 9h2v1h-2zM68 10h6v1h-6zM62 11h9v1h-9zM72 11h2v1h-2zM64 12h2v1h-2zM69 12h2v1h-2zM72 12h2v1h-2zM64 13h2v1h-2zM69 13h2v1h-2zM72 13h2v1h-2zM63 14h2v1h-2zM66 14h2v1h-2zM69 14h2v1h-2zM72 14h2v1h-2zM62 15h8v1h-8zM72 15h2v1h-2zM66 16h4v1h-4zM72 16h2v1h-2zM67 17h2v1h-2zM70 17h3v1h-3zM79 7h2v1h-2zM75 8h12v1h-12zM78 9h2v1h-2zM83 9h2v1h-2zM77 10h9v1h-9zM75 11h5v1h-5zM85 11h2v1h-2zM78 12h6v1h-6zM78 13h2v1h-2zM75 14h12v1h-12zM79 15h2v1h-2zM78 16h2v1h-2zM83 16h2v1h-2zM77 17h9v1h-9zM90 7h2v1h-2zM96 7h2v1h-2zM88 8h7v1h-7zM96 8h2v1h-2zM89 9h4v1h-4zM94 9h4v1h-4zM90 10h2v1h-2zM96 10h2v1h-2zM88 11h7v1h-7zM96 11h2v1h-2zM90 12h2v1h-2zM94 12h4v1h-4zM90 13h3v1h-3zM96 13h4v1h-4zM89 14h9v1h-9zM88 15h4v1h-4zM96 15h2v1h-2zM90 16h2v1h-2zM96 16h2v1h-2zM90 17h2v1h-2zM96 17h2v1h-2zM108 7h4v1h-4zM102 8h7v1h-7zM105 9h2v1h-2zM109 9h2v1h-2zM103 10h7v1h-7zM106 11h2v1h-2zM105 12h2v1h-2zM109 12h2v1h-2zM102 13h10v1h-10zM106 14h2v1h-2zM110 14h2v1h-2zM104 15h6v1h-6zM103 16h2v1h-2zM106 16h2v1h-2zM109 16h2v1h-2zM102 17h2v1h-2zM105 17h3v1h-3zM110 17h2v1h-2zM116 7h2v1h-2zM121 7h2v1h-2zM116 8h10v1h-10zM115 9h2v1h-2zM120 9h2v1h-2zM115 10h6v1h-6zM123 10h2v1h-2zM114 11h12v1h-12zM116 12h2v1h-2zM120 12h6v1h-6zM115 13h2v1h-2zM120 13h4v1h-4zM114 14h5v1h-5zM120 14h4v1h-4zM120 15h6v1h-6zM116 16h5v1h-5zM122 16h4v1h-4zM114 17h3v1h-3zM118 17h2v1h-2zM122 17h4v1h-4zM82 63h1v1h-1zM78 64h11v1h-11zM81 65h1v1h-1zM86 65h1v1h-1zM80 66h6v1h-6zM87 66h1v1h-1zM78 67h2v1h-2zM81 67h1v1h-1zM88 67h1v1h-1zM81 68h5v1h-5zM81 69h1v1h-1zM78 70h11v1h-11zM82 71h1v1h-1zM81 72h1v1h-1zM86 72h1v1h-1zM80 73h8v1h-8zM92 63h1v1h-1zM98 63h1v1h-1zM90 64h1v1h-1zM92 64h1v1h-1zM94 64h2v1h-2zM98 64h1v1h-1zM91 65h3v1h-3zM96 65h1v1h-1zM98 65h1v1h-1zM92 66h1v1h-1zM98 66h1v1h-1zM90 67h6v1h-6zM98 67h1v1h-1zM92 68h1v1h-1zM96 68h1v1h-1zM98 68h1v1h-1zM92 69h2v1h-2zM98 69h3v1h-3zM91 70h2v1h-2zM94 70h5v1h-5zM90 71h1v1h-1zM92 71h1v1h-1zM98 71h1v1h-1zM92 72h1v1h-1zM98 72h1v1h-1zM92 73h1v1h-1zM98 73h1v1h-1zM103 63h10v1h-10zM103 64h1v1h-1zM106 64h1v1h-1zM112 64h1v1h-1zM103 65h1v1h-1zM106 65h5v1h-5zM112 65h1v1h-1zM103 66h1v1h-1zM105 66h2v1h-2zM109 66h1v1h-1zM112 66h1v1h-1zM103 67h2v1h-2zM107 67h2v1h-2zM112 67h1v1h-1zM103 68h1v1h-1zM106 68h1v1h-1zM109 68h1v1h-1zM112 68h1v1h-1zM103 69h3v1h-3zM107 69h1v1h-1zM110 69h3v1h-3zM103 70h1v1h-1zM108 70h1v1h-1zM112 70h1v1h-1zM103 71h1v1h-1zM107 71h1v1h-1zM112 71h1v1h-1zM103 72h1v1h-1zM108 72h1v1h-1zM112 72h1v1h-1zM103 73h10v1h-10zM116 63h1v1h-1zM121 63h1v1h-1zM116 64h1v1h-1zM121 64h1v1h-1zM116 65h1v1h-1zM119 65h5v1h-5zM114 66h5v1h-5zM121 66h1v1h-1zM123 66h1v1h-1zM116 67h1v1h-1zM121 67h1v1h-1zM123 67h1v1h-1zM116 68h1v1h-1zM121 68h1v1h-1zM123 68h1v1h-1zM116 69h1v1h-1zM118 69h7v1h-7zM116 70h2v1h-2zM121 70h1v1h-1zM114 71h2v1h-2zM120 71h1v1h-1zM122 71h1v1h-1zM119 72h1v1h-1zM123 72h1v1h-1zM117 73h2v1h-2zM124 73h1v1h-1zM135 62h1v1h-1zM134 63h1v1h-1zM134 64h1v1h-1zM133 65h1v1h-1zM133 66h1v1h-1zM133 67h1v1h-1zM133 68h1v1h-1zM133 69h1v1h-1zM133 70h1v1h-1zM134 71h1v1h-1zM134 72h1v1h-1zM135 73h1v1h-1zM139 63h9v1h-9zM143 64h1v1h-1zM138 65h11v1h-11zM138 66h1v1h-1zM141 66h1v1h-1zM143 66h1v1h-1zM145 66h1v1h-1zM148 66h1v1h-1zM142 67h3v1h-3zM140 68h2v1h-2zM145 68h2v1h-2zM138 69h2v1h-2zM143 69h1v1h-1zM147 69h2v1h-2zM140 70h7v1h-7zM145 71h1v1h-1zM142 72h3v1h-3zM144 73h2v1h-2zM153 63h1v1h-1zM157 63h1v1h-1zM153 64h1v1h-1zM155 64h1v1h-1zM157 64h1v1h-1zM152 65h1v1h-1zM155 65h1v1h-1zM157 65h1v1h-1zM152 66h1v1h-1zM154 66h6v1h-6zM151 67h3v1h-3zM157 67h1v1h-1zM150 68h1v1h-1zM152 68h1v1h-1zM157 68h1v1h-1zM152 69h1v1h-1zM154 69h7v1h-7zM152 70h1v1h-1zM157 70h1v1h-1zM152 71h1v1h-1zM157 71h1v1h-1zM152 72h1v1h-1zM157 72h1v1h-1zM152 73h1v1h-1zM157 73h1v1h-1zM163 63h10v1h-10zM163 64h1v1h-1zM166 64h1v1h-1zM172 64h1v1h-1zM163 65h1v1h-1zM166 65h5v1h-5zM172 65h1v1h-1zM163 66h1v1h-1zM165 66h2v1h-2zM169 66h1v1h-1zM172 66h1v1h-1zM163 67h2v1h-2zM167 67h2v1h-2zM172 67h1v1h-1zM163 68h1v1h-1zM166 68h1v1h-1zM169 68h1v1h-1zM172 68h1v1h-1zM163 69h3v1h-3zM167 69h1v1h-1zM170 69h3v1h-3zM163 70h1v1h-1zM168 70h1v1h-1zM172 70h1v1h-1zM163 71h1v1h-1zM167 71h1v1h-1zM172 71h1v1h-1zM163 72h1v1h-1zM168 72h1v1h-1zM172 72h1v1h-1zM163 73h10v1h-10zM177 62h1v1h-1zM178 63h1v1h-1zM178 64h1v1h-1zM179 65h1v1h-1zM179 66h1v1h-1zM179 67h1v1h-1zM179 68h1v1h-1zM179 69h1v1h-1zM179 70h1v1h-1zM178 71h1v1h-1zM178 72h1v1h-1zM177 73h1v1h-1zM187 63h1v1h-1zM193 63h1v1h-1zM188 64h1v1h-1zM190 64h7v1h-7zM193 65h1v1h-1zM186 66h1v1h-1zM189 66h1v1h-1zM191 66h5v1h-5zM187 67h1v1h-1zM189 67h1v1h-1zM193 67h1v1h-1zM188 68h1v1h-1zM190 68h7v1h-7zM188 69h1v1h-1zM191 69h1v1h-1zM195 69h1v1h-1zM186 70h2v1h-2zM191 70h3v1h-3zM195 70h1v1h-1zM187 71h1v1h-1zM191 71h1v1h-1zM193 71h3v1h-3zM187 72h1v1h-1zM191 72h1v1h-1zM195 72h1v1h-1zM187 73h1v1h-1zM191 73h1v1h-1zM194 73h2v1h-2zM201 63h1v1h-1zM205 63h1v1h-1zM202 64h1v1h-1zM204 64h1v1h-1zM199 65h9v1h-9zM199 66h1v1h-1zM203 66h1v1h-1zM207 66h1v1h-1zM199 67h9v1h-9zM199 68h1v1h-1zM203 68h1v1h-1zM207 68h1v1h-1zM199 69h9v1h-9zM203 70h1v1h-1zM198 71h11v1h-11zM203 72h1v1h-1zM203 73h1v1h-1zM91 273h10v1h-10zM91 274h1v1h-1zM94 274h1v1h-1zM100 274h1v1h-1zM91 275h1v1h-1zM94 275h5v1h-5zM100 275h1v1h-1zM91 276h1v1h-1zM93 276h2v1h-2zM97 276h1v1h-1zM100 276h1v1h-1zM91 277h2v1h-2zM95 277h2v1h-2zM100 277h1v1h-1zM91 278h1v1h-1zM94 278h1v1h-1zM97 278h1v1h-1zM100 278h1v1h-1zM91 279h3v1h-3zM95 279h1v1h-1zM98 279h3v1h-3zM91 280h1v1h-1zM96 280h1v1h-1zM100 280h1v1h-1zM91 281h1v1h-1zM95 281h1v1h-1zM100 281h1v1h-1zM91 282h1v1h-1zM96 282h1v1h-1zM100 282h1v1h-1zM91 283h10v1h-10zM104 273h1v1h-1zM109 273h1v1h-1zM104 274h1v1h-1zM109 274h1v1h-1zM104 275h1v1h-1zM107 275h5v1h-5zM102 276h5v1h-5zM109 276h1v1h-1zM111 276h1v1h-1zM104 277h1v1h-1zM109 277h1v1h-1zM111 277h1v1h-1zM104 278h1v1h-1zM109 278h1v1h-1zM111 278h1v1h-1zM104 279h1v1h-1zM106 279h7v1h-7zM104 280h2v1h-2zM109 280h1v1h-1zM102 281h2v1h-2zM108 281h1v1h-1zM110 281h1v1h-1zM107 282h1v1h-1zM111 282h1v1h-1zM105 283h2v1h-2zM112 283h1v1h-1zM123 272h1v1h-1zM122 273h1v1h-1zM122 274h1v1h-1zM121 275h1v1h-1zM121 276h1v1h-1zM121 277h1v1h-1zM121 278h1v1h-1zM121 279h1v1h-1zM121 280h1v1h-1zM122 281h1v1h-1zM122 282h1v1h-1zM123 283h1v1h-1zM127 273h9v1h-9zM131 274h1v1h-1zM126 275h11v1h-11zM126 276h1v1h-1zM129 276h1v1h-1zM131 276h1v1h-1zM133 276h1v1h-1zM136 276h1v1h-1zM130 277h3v1h-3zM128 278h2v1h-2zM133 278h2v1h-2zM126 279h2v1h-2zM131 279h1v1h-1zM135 279h2v1h-2zM128 280h7v1h-7zM133 281h1v1h-1zM130 282h3v1h-3zM132 283h2v1h-2zM141 273h1v1h-1zM145 273h1v1h-1zM141 274h1v1h-1zM143 274h1v1h-1zM145 274h1v1h-1zM140 275h1v1h-1zM143 275h1v1h-1zM145 275h1v1h-1zM140 276h1v1h-1zM142 276h6v1h-6zM139 277h3v1h-3zM145 277h1v1h-1zM138 278h1v1h-1zM140 278h1v1h-1zM145 278h1v1h-1zM140 279h1v1h-1zM142 279h7v1h-7zM140 280h1v1h-1zM145 280h1v1h-1zM140 281h1v1h-1zM145 281h1v1h-1zM140 282h1v1h-1zM145 282h1v1h-1zM140 283h1v1h-1zM145 283h1v1h-1zM151 273h10v1h-10zM151 274h1v1h-1zM154 274h1v1h-1zM160 274h1v1h-1zM151 275h1v1h-1zM154 275h5v1h-5zM160 275h1v1h-1zM151 276h1v1h-1zM153 276h2v1h-2zM157 276h1v1h-1zM160 276h1v1h-1zM151 277h2v1h-2zM155 277h2v1h-2zM160 277h1v1h-1zM151 278h1v1h-1zM154 278h1v1h-1zM157 278h1v1h-1zM160 278h1v1h-1zM151 279h3v1h-3zM155 279h1v1h-1zM158 279h3v1h-3zM151 280h1v1h-1zM156 280h1v1h-1zM160 280h1v1h-1zM151 281h1v1h-1zM155 281h1v1h-1zM160 281h1v1h-1zM151 282h1v1h-1zM156 282h1v1h-1zM160 282h1v1h-1zM151 283h10v1h-10zM165 272h1v1h-1zM166 273h1v1h-1zM166 274h1v1h-1zM167 275h1v1h-1zM167 276h1v1h-1zM167 277h1v1h-1zM167 278h1v1h-1zM167 279h1v1h-1zM167 280h1v1h-1zM166 281h1v1h-1zM166 282h1v1h-1zM165 283h1v1h-1zM174 273h5v1h-5zM180 273h5v1h-5zM177 274h1v1h-1zM182 274h1v1h-1zM175 275h2v1h-2zM180 275h5v1h-5zM176 276h1v1h-1zM180 276h1v1h-1zM184 276h1v1h-1zM174 277h5v1h-5zM180 277h1v1h-1zM182 277h1v1h-1zM184 277h1v1h-1zM176 278h1v1h-1zM178 278h1v1h-1zM180 278h1v1h-1zM182 278h1v1h-1zM184 278h1v1h-1zM176 279h1v1h-1zM180 279h1v1h-1zM182 279h1v1h-1zM184 279h1v1h-1zM176 280h1v1h-1zM180 280h1v1h-1zM182 280h1v1h-1zM184 280h1v1h-1zM176 281h1v1h-1zM180 281h1v1h-1zM182 281h1v1h-1zM184 281h1v1h-1zM176 282h1v1h-1zM181 282h1v1h-1zM183 282h1v1h-1zM175 283h2v1h-2zM179 283h2v1h-2zM184 283h1v1h-1zM189 273h1v1h-1zM192 273h1v1h-1zM187 274h1v1h-1zM189 274h1v1h-1zM192 274h5v1h-5zM187 275h1v1h-1zM189 275h1v1h-1zM191 275h1v1h-1zM194 275h1v1h-1zM187 276h1v1h-1zM189 276h1v1h-1zM195 276h1v1h-1zM188 277h7v1h-7zM188 278h1v1h-1zM194 278h1v1h-1zM188 279h1v1h-1zM191 279h1v1h-1zM194 279h1v1h-1zM188 280h1v1h-1zM191 280h1v1h-1zM194 280h1v1h-1zM188 281h1v1h-1zM191 281h1v1h-1zM194 281h1v1h-1zM196 281h1v1h-1zM189 282h2v1h-2zM192 282h1v1h-1zM196 282h1v1h-1zM186 283h3v1h-3zM192 283h5v1h-5zM450 63h1v1h-1zM448 64h7v1h-7zM448 65h1v1h-1zM454 65h1v1h-1zM448 66h1v1h-1zM454 66h1v1h-1zM448 67h7v1h-7zM448 68h1v1h-1zM454 68h1v1h-1zM448 69h7v1h-7zM448 70h1v1h-1zM454 70h1v1h-1zM448 71h1v1h-1zM454 71h1v1h-1zM448 72h7v1h-7zM448 73h1v1h-1zM454 73h1v1h-1zM465 63h1v1h-1zM459 64h4v1h-4zM465 64h1v1h-1zM465 65h1v1h-1zM464 66h5v1h-5zM458 67h6v1h-6zM465 67h1v1h-1zM468 67h1v1h-1zM460 68h1v1h-1zM465 68h1v1h-1zM468 68h1v1h-1zM460 69h1v1h-1zM465 69h1v1h-1zM468 69h1v1h-1zM459 70h1v1h-1zM462 70h1v1h-1zM465 70h1v1h-1zM468 70h1v1h-1zM458 71h5v1h-5zM464 71h1v1h-1zM468 71h1v1h-1zM462 72h1v1h-1zM464 72h1v1h-1zM468 72h1v1h-1zM463 73h1v1h-1zM466 73h2v1h-2zM474 63h1v1h-1zM470 64h11v1h-11zM473 65h1v1h-1zM478 65h1v1h-1zM472 66h6v1h-6zM479 66h1v1h-1zM470 67h2v1h-2zM473 67h1v1h-1zM480 67h1v1h-1zM473 68h5v1h-5zM473 69h1v1h-1zM470 70h11v1h-11zM474 71h1v1h-1zM473 72h1v1h-1zM478 72h1v1h-1zM472 73h8v1h-8zM484 63h1v1h-1zM490 63h1v1h-1zM482 64h1v1h-1zM484 64h1v1h-1zM486 64h2v1h-2zM490 64h1v1h-1zM483 65h3v1h-3zM488 65h1v1h-1zM490 65h1v1h-1zM484 66h1v1h-1zM490 66h1v1h-1zM482 67h6v1h-6zM490 67h1v1h-1zM484 68h1v1h-1zM488 68h1v1h-1zM490 68h1v1h-1zM484 69h2v1h-2zM490 69h3v1h-3zM483 70h2v1h-2zM486 70h5v1h-5zM482 71h1v1h-1zM484 71h1v1h-1zM490 71h1v1h-1zM484 72h1v1h-1zM490 72h1v1h-1zM484 73h1v1h-1zM490 73h1v1h-1zM495 63h10v1h-10zM495 64h1v1h-1zM498 64h1v1h-1zM504 64h1v1h-1zM495 65h1v1h-1zM498 65h5v1h-5zM504 65h1v1h-1zM495 66h1v1h-1zM497 66h2v1h-2zM501 66h1v1h-1zM504 66h1v1h-1zM495 67h2v1h-2zM499 67h2v1h-2zM504 67h1v1h-1zM495 68h1v1h-1zM498 68h1v1h-1zM501 68h1v1h-1zM504 68h1v1h-1zM495 69h3v1h-3zM499 69h1v1h-1zM502 69h3v1h-3zM495 70h1v1h-1zM500 70h1v1h-1zM504 70h1v1h-1zM495 71h1v1h-1zM499 71h1v1h-1zM504 71h1v1h-1zM495 72h1v1h-1zM500 72h1v1h-1zM504 72h1v1h-1zM495 73h10v1h-10zM507 63h6v1h-6zM516 63h1v1h-1zM508 64h1v1h-1zM511 64h1v1h-1zM515 64h1v1h-1zM508 65h1v1h-1zM511 65h1v1h-1zM514 65h1v1h-1zM508 66h1v1h-1zM511 66h1v1h-1zM516 66h1v1h-1zM506 67h7v1h-7zM515 67h1v1h-1zM508 68h1v1h-1zM511 68h1v1h-1zM514 68h1v1h-1zM508 69h1v1h-1zM511 69h1v1h-1zM513 69h1v1h-1zM508 70h1v1h-1zM511 70h1v1h-1zM516 70h1v1h-1zM508 71h1v1h-1zM511 71h1v1h-1zM515 71h1v1h-1zM507 72h1v1h-1zM511 72h1v1h-1zM514 72h1v1h-1zM506 73h1v1h-1zM511 73h3v1h-3zM518 63h5v1h-5zM524 63h5v1h-5zM521 64h1v1h-1zM526 64h1v1h-1zM519 65h2v1h-2zM524 65h5v1h-5zM520 66h1v1h-1zM524 66h1v1h-1zM528 66h1v1h-1zM518 67h5v1h-5zM524 67h1v1h-1zM526 67h1v1h-1zM528 67h1v1h-1zM520 68h1v1h-1zM522 68h1v1h-1zM524 68h1v1h-1zM526 68h1v1h-1zM528 68h1v1h-1zM520 69h1v1h-1zM524 69h1v1h-1zM526 69h1v1h-1zM528 69h1v1h-1zM520 70h1v1h-1zM524 70h1v1h-1zM526 70h1v1h-1zM528 70h1v1h-1zM520 71h1v1h-1zM524 71h1v1h-1zM526 71h1v1h-1zM528 71h1v1h-1zM520 72h1v1h-1zM525 72h1v1h-1zM527 72h1v1h-1zM519 73h2v1h-2zM523 73h2v1h-2zM528 73h1v1h-1zM533 63h1v1h-1zM536 63h1v1h-1zM531 64h1v1h-1zM533 64h1v1h-1zM536 64h5v1h-5zM531 65h1v1h-1zM533 65h1v1h-1zM535 65h1v1h-1zM538 65h1v1h-1zM531 66h1v1h-1zM533 66h1v1h-1zM539 66h1v1h-1zM532 67h7v1h-7zM532 68h1v1h-1zM538 68h1v1h-1zM532 69h1v1h-1zM535 69h1v1h-1zM538 69h1v1h-1zM532 70h1v1h-1zM535 70h1v1h-1zM538 70h1v1h-1zM532 71h1v1h-1zM535 71h1v1h-1zM538 71h1v1h-1zM540 71h1v1h-1zM533 72h2v1h-2zM536 72h1v1h-1zM540 72h1v1h-1zM530 73h3v1h-3zM536 73h5v1h-5zM548 63h1v1h-1zM554 63h2v1h-2zM546 64h8v1h-8zM548 65h1v1h-1zM553 65h1v1h-1zM546 66h5v1h-5zM553 66h3v1h-3zM548 67h1v1h-1zM551 67h3v1h-3zM546 68h5v1h-5zM553 68h1v1h-1zM555 68h2v1h-2zM548 69h1v1h-1zM551 69h4v1h-4zM547 70h3v1h-3zM553 70h1v1h-1zM546 71h1v1h-1zM548 71h1v1h-1zM550 71h1v1h-1zM553 71h1v1h-1zM556 71h1v1h-1zM548 72h1v1h-1zM553 72h1v1h-1zM556 72h1v1h-1zM548 73h1v1h-1zM554 73h3v1h-3zM566 63h1v1h-1zM558 64h4v1h-4zM566 64h1v1h-1zM558 65h1v1h-1zM561 65h8v1h-8zM558 66h1v1h-1zM561 66h1v1h-1zM566 66h1v1h-1zM558 67h1v1h-1zM561 67h1v1h-1zM563 67h1v1h-1zM566 67h1v1h-1zM558 68h4v1h-4zM564 68h1v1h-1zM566 68h1v1h-1zM558 69h1v1h-1zM561 69h1v1h-1zM564 69h1v1h-1zM566 69h1v1h-1zM558 70h1v1h-1zM561 70h1v1h-1zM566 70h1v1h-1zM558 71h1v1h-1zM561 71h1v1h-1zM566 71h1v1h-1zM558 72h4v1h-4zM566 72h1v1h-1zM564 73h3v1h-3zM589 63h1v1h-1zM593 63h1v1h-1zM586 64h3v1h-3zM593 64h1v1h-1zM588 65h1v1h-1zM591 65h1v1h-1zM593 65h1v1h-1zM595 65h1v1h-1zM586 66h4v1h-4zM591 66h1v1h-1zM593 66h1v1h-1zM596 66h1v1h-1zM588 67h1v1h-1zM591 67h1v1h-1zM593 67h1v1h-1zM596 67h1v1h-1zM587 68h3v1h-3zM591 68h1v1h-1zM593 68h1v1h-1zM587 69h2v1h-2zM590 69h1v1h-1zM593 69h1v1h-1zM596 69h1v1h-1zM586 70h1v1h-1zM588 70h1v1h-1zM595 70h1v1h-1zM588 71h1v1h-1zM594 71h1v1h-1zM588 72h1v1h-1zM592 72h2v1h-2zM588 73h1v1h-1zM590 73h2v1h-2z"/>
<path fill="#000" d="M13 80h10v1h-10zM13 81h1v1h-1zM16 81h1v1h-1zM22 81h1v1h-1zM13 82h1v1h-1zM16 82h5v1h-5zM22 82h1v1h-1zM13 83h1v1h-1zM15 83h2v1h-2zM19 83h1v1h-1zM22 83h1v1h-1zM13 84h2v1h-2zM17 84h2v1h-2zM22 84h1v1h-1zM13 85h1v1h-1zM16 85h1v1h-1zM19 85h1v1h-1zM22 85h1v1h-1zM13 86h3v1h-3zM17 86h1v1h-1zM20 86h3v1h-3zM13 87h1v1h-1zM18 87h1v1h-1zM22 87h1v1h-1zM13 88h1v1h-1zM17 88h1v1h-1zM22 88h1v1h-1zM13 89h1v1h-1zM18 89h1v1h-1zM22 89h1v1h-1zM13 90h10v1h-10zM26 80h1v1h-1zM31 80h1v1h-1zM26 81h1v1h-1zM31 81h1v1h-1zM26 82h1v1h-1zM29 82h5v1h-5zM24 83h5v1h-5zM31 83h1v1h-1zM33 83h1v1h-1zM26 84h1v1h-1zM31 84h1v1h-1zM33 84h1v1h-1zM26 85h1v1h-1zM31 85h1v1h-1zM33 85h1v1h-1zM26 86h1v1h-1zM28 86h7v1h-7zM26 87h2v1h-2zM31 87h1v1h-1zM24 88h2v1h-2zM30 88h1v1h-1zM32 88h1v1h-1zM29 89h1v1h-1zM33 89h1v1h-1zM27 90h2v1h-2zM34 90h1v1h-1zM39 80h1v1h-1zM39 81h7v1h-7zM39 82h1v1h-1zM44 82h1v1h-1zM38 83h1v1h-1zM40 83h1v1h-1zM43 83h1v1h-1zM37 84h1v1h-1zM41 84h2v1h-2zM41 85h1v1h-1zM39 86h7v1h-7zM36 87h4v1h-4zM45 87h1v1h-1zM39 88h1v1h-1zM45 88h1v1h-1zM39 89h1v1h-1zM45 89h1v1h-1zM39 90h7v1h-7zM51 80h2v1h-2zM54 80h1v1h-1zM48 81h3v1h-3zM54 81h1v1h-1zM50 82h1v1h-1zM53 82h6v1h-6zM48 83h5v1h-5zM55 83h1v1h-1zM58 83h1v1h-1zM50 84h1v1h-1zM55 84h1v1h-1zM49 85h3v1h-3zM53 85h1v1h-1zM55 85h1v1h-1zM57 85h1v1h-1zM49 86h2v1h-2zM53 86h1v1h-1zM55 86h1v1h-1zM57 86h1v1h-1zM48 87h1v1h-1zM50 87h1v1h-1zM52 87h1v1h-1zM55 87h1v1h-1zM58 87h1v1h-1zM50 88h2v1h-2zM55 88h1v1h-1zM58 88h1v1h-1zM50 89h1v1h-1zM55 89h1v1h-1zM50 90h1v1h-1zM54 90h2v1h-2zM127 80h1v1h-1zM130 80h1v1h-1zM132 80h1v1h-1zM134 80h1v1h-1zM128 81h1v1h-1zM130 81h2v1h-2zM134 81h1v1h-1zM127 82h6v1h-6zM134 82h4v1h-4zM129 83h2v1h-2zM133 83h2v1h-2zM136 83h1v1h-1zM128 84h1v1h-1zM130 84h2v1h-2zM134 84h1v1h-1zM136 84h1v1h-1zM127 85h1v1h-1zM130 85h1v1h-1zM132 85h1v1h-1zM134 85h1v1h-1zM136 85h1v1h-1zM127 86h6v1h-6zM134 86h1v1h-1zM136 86h1v1h-1zM129 87h1v1h-1zM131 87h1v1h-1zM134 87h1v1h-1zM136 87h1v1h-1zM128 88h2v1h-2zM131 88h1v1h-1zM135 88h1v1h-1zM130 89h1v1h-1zM134 89h1v1h-1zM136 89h1v1h-1zM127 90h3v1h-3zM131 90h3v1h-3zM137 90h1v1h-1zM141 80h7v1h-7zM141 81h1v1h-1zM147 81h1v1h-1zM141 82h7v1h-7zM141 83h1v1h-1zM147 83h1v1h-1zM139 84h11v1h-11zM141 85h1v1h-1zM144 85h1v1h-1zM147 85h1v1h-1zM141 86h7v1h-7zM141 87h1v1h-1zM144 87h1v1h-1zM147 87h1v1h-1zM140 88h9v1h-9zM144 89h1v1h-1zM139 90h11v1h-11zM172 82h1v1h-1zM177 82h1v1h-1zM172 83h1v1h-1zM177 83h1v1h-1zM173 84h1v1h-1zM176 84h1v1h-1zM174 85h2v1h-2zM173 86h1v1h-1zM176 86h1v1h-1zM173 87h1v1h-1zM176 87h1v1h-1zM172 88h1v1h-1zM177 88h1v1h-1zM172 89h1v1h-1zM177 89h1v1h-1zM179 80h1v1h-1zM184 80h1v1h-1zM179 81h1v1h-1zM184 81h1v1h-1zM179 82h1v1h-1zM184 82h1v1h-1zM187 82h1v1h-1zM179 83h1v1h-1zM184 83h1v1h-1zM186 83h1v1h-1zM179 84h4v1h-4zM184 84h2v1h-2zM179 85h1v1h-1zM184 85h1v1h-1zM179 86h1v1h-1zM184 86h1v1h-1zM179 87h1v1h-1zM184 87h1v1h-1zM179 88h1v1h-1zM181 88h2v1h-2zM184 88h1v1h-1zM188 88h1v1h-1zM179 89h2v1h-2zM184 89h1v1h-1zM188 89h1v1h-1zM179 90h1v1h-1zM185 90h4v1h-4zM192 80h6v1h-6zM200 80h1v1h-1zM192 81h1v1h-1zM195 81h1v1h-1zM200 81h1v1h-1zM192 82h1v1h-1zM195 82h1v1h-1zM198 82h1v1h-1zM200 82h1v1h-1zM191 83h2v1h-2zM194 83h1v1h-1zM196 83h3v1h-3zM200 83h1v1h-1zM191 84h2v1h-2zM194 84h1v1h-1zM197 84h2v1h-2zM200 84h1v1h-1zM190 85h1v1h-1zM192 85h3v1h-3zM196 85h1v1h-1zM198 85h1v1h-1zM200 85h1v1h-1zM192 86h1v1h-1zM195 86h2v1h-2zM198 86h1v1h-1zM200 86h1v1h-1zM192 87h1v1h-1zM196 87h1v1h-1zM198 87h1v1h-1zM200 87h1v1h-1zM192 88h1v1h-1zM195 88h1v1h-1zM200 88h1v1h-1zM192 89h1v1h-1zM194 89h1v1h-1zM200 89h1v1h-1zM192 90h2v1h-2zM199 90h2v1h-2zM220 82h1v1h-1zM226 82h1v1h-1zM221 83h1v1h-1zM225 83h1v1h-1zM222 84h1v1h-1zM224 84h1v1h-1zM223 85h1v1h-1zM223 86h1v1h-1zM223 87h1v1h-1zM223 88h1v1h-1zM223 89h1v1h-1zM227 80h1v1h-1zM232 80h1v1h-1zM227 81h1v1h-1zM232 81h1v1h-1zM227 82h1v1h-1zM232 82h1v1h-1zM235 82h1v1h-1zM227 83h1v1h-1zM232 83h1v1h-1zM234 83h1v1h-1zM227 84h4v1h-4zM232 84h2v1h-2zM227 85h1v1h-1zM232 85h1v1h-1zM227 86h1v1h-1zM232 86h1v1h-1zM227 87h1v1h-1zM232 87h1v1h-1zM227 88h1v1h-1zM229 88h2v1h-2zM232 88h1v1h-1zM236 88h1v1h-1zM227 89h2v1h-2zM232 89h1v1h-1zM236 89h1v1h-1zM227 90h1v1h-1zM233 90h4v1h-4zM240 80h6v1h-6zM248 80h1v1h-1zM240 81h1v1h-1zM243 81h1v1h-1zM248 81h1v1h-1zM240 82h1v1h-1zM243 82h1v1h-1zM246 82h1v1h-1zM248 82h1v1h-1zM239 83h2v1h-2zM242 83h1v1h-1zM244 83h3v1h-3zM248 83h1v1h-1zM239 84h2v1h-2zM242 84h1v1h-1zM245 84h2v1h-2zM248 84h1v1h-1zM238 85h1v1h-1zM240 85h3v1h-3zM244 85h1v1h-1zM246 85h1v1h-1zM248 85h1v1h-1zM240 86h1v1h-1zM243 86h2v1h-2zM246 86h1v1h-1zM248 86h1v1h-1zM240 87h1v1h-1zM244 87h1v1h-1zM246 87h1v1h-1zM248 87h1v1h-1zM240 88h1v1h-1zM243 88h1v1h-1zM248 88h1v1h-1zM240 89h1v1h-1zM242 89h1v1h-1zM248 89h1v1h-1zM240 90h2v1h-2zM247 90h2v1h-2zM10 248h10v1h-10zM10 249h1v1h-1zM13 249h1v1h-1zM19 249h1v1h-1zM10 250h1v1h-1zM13 250h5v1h-5zM19 250h1v1h-1zM10 251h1v1h-1zM12 251h2v1h-2zM16 251h1v1h-1zM19 251h1v1h-1zM10 252h2v1h-2zM14 252h2v1h-2zM19 252h1v1h-1zM10 253h1v1h-1zM13 253h1v1h-1zM16 253h1v1h-1zM19 253h1v1h-1zM10 254h3v1h-3zM14 254h1v1h-1zM17 254h3v1h-3zM10 255h1v1h-1zM15 255h1v1h-1zM19 255h1v1h-1zM10 256h1v1h-1zM14 256h1v1h-1zM19 256h1v1h-1zM10 257h1v1h-1zM15 257h1v1h-1zM19 257h1v1h-1zM10 258h10v1h-10zM23 248h1v1h-1zM28 248h1v1h-1zM23 249h1v1h-1zM28 249h1v1h-1zM23 250h1v1h-1zM26 250h5v1h-5zM21 251h5v1h-5zM28 251h1v1h-1zM30 251h1v1h-1zM23 252h1v1h-1zM28 252h1v1h-1zM30 252h1v1h-1zM23 253h1v1h-1zM28 253h1v1h-1zM30 253h1v1h-1zM23 254h1v1h-1zM25 254h7v1h-7zM23 255h2v1h-2zM28 255h1v1h-1zM21 256h2v1h-2zM27 256h1v1h-1zM29 256h1v1h-1zM26 257h1v1h-1zM30 257h1v1h-1zM24 258h2v1h-2zM31 258h1v1h-1zM36 248h1v1h-1zM36 249h7v1h-7zM36 250h1v1h-1zM41 250h1v1h-1zM35 251h1v1h-1zM37 251h1v1h-1zM40 251h1v1h-1zM34 252h1v1h-1zM38 252h2v1h-2zM38 253h1v1h-1zM36 254h7v1h-7zM33 255h4v1h-4zM42 255h1v1h-1zM36 256h1v1h-1zM42 256h1v1h-1zM36 257h1v1h-1zM42 257h1v1h-1zM36 258h7v1h-7zM48 248h2v1h-2zM51 248h1v1h-1zM45 249h3v1h-3zM51 249h1v1h-1zM47 250h1v1h-1zM50 250h6v1h-6zM45 251h5v1h-5zM52 251h1v1h-1zM55 251h1v1h-1zM47 252h1v1h-1zM52 252h1v1h-1zM46 253h3v1h-3zM50 253h1v1h-1zM52 253h1v1h-1zM54 253h1v1h-1zM46 254h2v1h-2zM50 254h1v1h-1zM52 254h1v1h-1zM54 254h1v1h-1zM45 255h1v1h-1zM47 255h1v1h-1zM49 255h1v1h-1zM52 255h1v1h-1zM55 255h1v1h-1zM47 256h2v1h-2zM52 256h1v1h-1zM55 256h1v1h-1zM47 257h1v1h-1zM52 257h1v1h-1zM47 258h1v1h-1zM51 258h2v1h-2zM121 248h1v1h-1zM124 248h1v1h-1zM126 248h1v1h-1zM128 248h1v1h-1zM122 249h1v1h-1zM124 249h2v1h-2zM128 249h1v1h-1zM121 250h6v1h-6zM128 250h4v1h-4zM123 251h2v1h-2zM127 251h2v1h-2zM130 251h1v1h-1zM122 252h1v1h-1zM124 252h2v1h-2zM128 252h1v1h-1zM130 252h1v1h-1zM121 253h1v1h-1zM124 253h1v1h-1zM126 253h1v1h-1zM128 253h1v1h-1zM130 253h1v1h-1zM121 254h6v1h-6zM128 254h1v1h-1zM130 254h1v1h-1zM123 255h1v1h-1zM125 255h1v1h-1zM128 255h1v1h-1zM130 255h1v1h-1zM122 256h2v1h-2zM125 256h1v1h-1zM129 256h1v1h-1zM124 257h1v1h-1zM128 257h1v1h-1zM130 257h1v1h-1zM121 258h3v1h-3zM125 258h3v1h-3zM131 258h1v1h-1zM135 248h7v1h-7zM135 249h1v1h-1zM141 249h1v1h-1zM135 250h7v1h-7zM135 251h1v1h-1zM141 251h1v1h-1zM133 252h11v1h-11zM135 253h1v1h-1zM138 253h1v1h-1zM141 253h1v1h-1zM135 254h7v1h-7zM135 255h1v1h-1zM138 255h1v1h-1zM141 255h1v1h-1zM134 256h9v1h-9zM138 257h1v1h-1zM133 258h11v1h-11zM215 248h1v1h-1zM209 249h4v1h-4zM215 249h4v1h-4zM211 250h1v1h-1zM214 250h1v1h-1zM217 250h1v1h-1zM210 251h1v1h-1zM213 251h7v1h-7zM209 252h4v1h-4zM214 252h1v1h-1zM216 252h1v1h-1zM219 252h1v1h-1zM210 253h1v1h-1zM212 253h1v1h-1zM214 253h6v1h-6zM210 254h1v1h-1zM212 254h1v1h-1zM214 254h1v1h-1zM216 254h1v1h-1zM219 254h1v1h-1zM210 255h1v1h-1zM212 255h1v1h-1zM214 255h6v1h-6zM210 256h3v1h-3zM214 256h1v1h-1zM216 256h1v1h-1zM219 256h1v1h-1zM210 257h1v1h-1zM214 257h1v1h-1zM216 257h1v1h-1zM219 257h1v1h-1zM213 258h1v1h-1zM218 258h2v1h-2zM222 248h1v1h-1zM228 248h1v1h-1zM223 249h1v1h-1zM228 249h1v1h-1zM228 250h1v1h-1zM228 251h1v1h-1zM221 252h3v1h-3zM228 252h1v1h-1zM223 253h1v1h-1zM228 253h1v1h-1zM223 254h1v1h-1zM227 254h1v1h-1zM229 254h1v1h-1zM223 255h1v1h-1zM225 255h1v1h-1zM227 255h1v1h-1zM229 255h1v1h-1zM223 256h2v1h-2zM226 256h1v1h-1zM230 256h1v1h-1zM223 257h1v1h-1zM225 257h1v1h-1zM230 257h1v1h-1zM224 258h1v1h-1zM231 258h1v1h-1zM236 248h1v1h-1zM239 248h1v1h-1zM236 249h1v1h-1zM239 249h5v1h-5zM235 250h1v1h-1zM237 250h2v1h-2zM240 250h1v1h-1zM242 250h1v1h-1zM235 251h1v1h-1zM237 251h1v1h-1zM241 251h1v1h-1zM234 252h2v1h-2zM237 252h1v1h-1zM239 252h2v1h-2zM242 252h1v1h-1zM233 253h1v1h-1zM235 253h1v1h-1zM237 253h2v1h-2zM241 253h1v1h-1zM243 253h1v1h-1zM235 254h1v1h-1zM237 254h1v1h-1zM240 254h1v1h-1zM242 254h1v1h-1zM235 255h1v1h-1zM237 255h1v1h-1zM239 255h1v1h-1zM241 255h1v1h-1zM235 256h1v1h-1zM237 256h1v1h-1zM240 256h1v1h-1zM243 256h1v1h-1zM235 257h1v1h-1zM241 257h2v1h-2zM235 258h1v1h-1zM238 258h3v1h-3zM252 248h1v1h-1zM245 249h5v1h-5zM252 249h1v1h-1zM249 250h1v1h-1zM251 250h5v1h-5zM249 251h2v1h-2zM254 251h1v1h-1zM246 252h4v1h-4zM251 252h1v1h-1zM254 252h1v1h-1zM246 253h1v1h-1zM251 253h1v1h-1zM254 253h1v1h-1zM246 254h1v1h-1zM251 254h1v1h-1zM254 254h1v1h-1zM246 255h1v1h-1zM252 255h2v1h-2zM246 256h1v1h-1zM248 256h1v1h-1zM252 256h2v1h-2zM246 257h2v1h-2zM251 257h1v1h-1zM254 257h1v1h-1zM246 258h1v1h-1zM249 258h2v1h-2zM255 258h1v1h-1zM20 539h10v1h-10zM20 540h1v1h-1zM23 540h1v1h-1zM29 540h1v1h-1zM20 541h1v1h-1zM23 541h5v1h-5zM29 541h1v1h-1zM20 542h1v1h-1zM22 542h2v1h-2zM26 542h1v1h-1zM29 542h1v1h-1zM20 543h2v1h-2zM24 543h2v1h-2zM29 543h1v1h-1zM20 544h1v1h-1zM23 544h1v1h-1zM26 544h1v1h-1zM29 544h1v1h-1zM20 545h3v1h-3zM24 545h1v1h-1zM27 545h3v1h-3zM20 546h1v1h-1zM25 546h1v1h-1zM29 546h1v1h-1zM20 547h1v1h-1zM24 547h1v1h-1zM29 547h1v1h-1zM20 548h1v1h-1zM25 548h1v1h-1zM29 548h1v1h-1zM20 549h10v1h-10zM33 539h1v1h-1zM38 539h1v1h-1zM33 540h1v1h-1zM38 540h1v1h-1zM33 541h1v1h-1zM36 541h5v1h-5zM31 542h5v1h-5zM38 542h1v1h-1zM40 542h1v1h-1zM33 543h1v1h-1zM38 543h1v1h-1zM40 543h1v1h-1zM33 544h1v1h-1zM38 544h1v1h-1zM40 544h1v1h-1zM33 545h1v1h-1zM35 545h7v1h-7zM33 546h2v1h-2zM38 546h1v1h-1zM31 547h2v1h-2zM37 547h1v1h-1zM39 547h1v1h-1zM36 548h1v1h-1zM40 548h1v1h-1zM34 549h2v1h-2zM41 549h1v1h-1zM46 539h2v1h-2zM50 539h1v1h-1zM43 540h3v1h-3zM50 540h1v1h-1zM45 541h1v1h-1zM48 541h6v1h-6zM43 542h6v1h-6zM50 542h1v1h-1zM53 542h1v1h-1zM45 543h1v1h-1zM48 543h1v1h-1zM50 543h1v1h-1zM53 543h1v1h-1zM45 544h2v1h-2zM48 544h1v1h-1zM50 544h1v1h-1zM53 544h1v1h-1zM44 545h2v1h-2zM47 545h7v1h-7zM43 546h1v1h-1zM45 546h1v1h-1zM50 546h1v1h-1zM45 547h1v1h-1zM50 547h1v1h-1zM45 548h1v1h-1zM50 548h1v1h-1zM45 549h1v1h-1zM50 549h1v1h-1zM57 539h1v1h-1zM60 539h1v1h-1zM63 539h1v1h-1zM58 540h1v1h-1zM60 540h1v1h-1zM62 540h1v1h-1zM55 541h11v1h-11zM58 542h1v1h-1zM60 542h1v1h-1zM62 542h1v1h-1zM57 543h1v1h-1zM60 543h1v1h-1zM63 543h1v1h-1zM56 544h1v1h-1zM64 544h1v1h-1zM60 545h1v1h-1zM55 546h11v1h-11zM59 547h1v1h-1zM61 547h1v1h-1zM58 548h1v1h-1zM62 548h1v1h-1zM55 549h3v1h-3zM63 549h3v1h-3zM67 539h1v1h-1zM70 539h1v1h-1zM72 539h1v1h-1zM74 539h1v1h-1zM68 540h1v1h-1zM70 540h2v1h-2zM74 540h1v1h-1zM67 541h6v1h-6zM74 541h4v1h-4zM69 542h2v1h-2zM73 542h2v1h-2zM76 542h1v1h-1zM68 543h1v1h-1zM70 543h2v1h-2zM74 543h1v1h-1zM76 543h1v1h-1zM67 544h1v1h-1zM70 544h1v1h-1zM72 544h1v1h-1zM74 544h1v1h-1zM76 544h1v1h-1zM67 545h6v1h-6zM74 545h1v1h-1zM76 545h1v1h-1zM69 546h1v1h-1zM71 546h1v1h-1zM74 546h1v1h-1zM76 546h1v1h-1zM68 547h2v1h-2zM71 547h1v1h-1zM75 547h1v1h-1zM70 548h1v1h-1zM74 548h1v1h-1zM76 548h1v1h-1zM67 549h3v1h-3zM71 549h3v1h-3zM77 549h1v1h-1zM123 539h10v1h-10zM123 540h1v1h-1zM126 540h1v1h-1zM132 540h1v1h-1zM123 541h1v1h-1zM126 541h5v1h-5zM132 541h1v1h-1zM123 542h1v1h-1zM125 542h2v1h-2zM129 542h1v1h-1zM132 542h1v1h-1zM123 543h2v1h-2zM127 543h2v1h-2zM132 543h1v1h-1zM123 544h1v1h-1zM126 544h1v1h-1zM129 544h1v1h-1zM132 544h1v1h-1zM123 545h3v1h-3zM127 545h1v1h-1zM130 545h3v1h-3zM123 546h1v1h-1zM128 546h1v1h-1zM132 546h1v1h-1zM123 547h1v1h-1zM127 547h1v1h-1zM132 547h1v1h-1zM123 548h1v1h-1zM128 548h1v1h-1zM132 548h1v1h-1zM123 549h10v1h-10zM136 539h1v1h-1zM141 539h1v1h-1zM136 540h1v1h-1zM141 540h1v1h-1zM136 541h1v1h-1zM139 541h5v1h-5zM134 542h5v1h-5zM141 542h1v1h-1zM143 542h1v1h-1zM136 543h1v1h-1zM141 543h1v1h-1zM143 543h1v1h-1zM136 544h1v1h-1zM141 544h1v1h-1zM143 544h1v1h-1zM136 545h1v1h-1zM138 545h7v1h-7zM136 546h2v1h-2zM141 546h1v1h-1zM134 547h2v1h-2zM140 547h1v1h-1zM142 547h1v1h-1zM139 548h1v1h-1zM143 548h1v1h-1zM137 549h2v1h-2zM144 549h1v1h-1zM149 539h1v1h-1zM153 539h1v1h-1zM150 540h1v1h-1zM152 540h1v1h-1zM148 541h7v1h-7zM148 542h1v1h-1zM154 542h1v1h-1zM148 543h1v1h-1zM154 543h1v1h-1zM148 544h7v1h-7zM148 545h1v1h-1zM154 545h1v1h-1zM151 546h1v1h-1zM155 546h1v1h-1zM147 547h1v1h-1zM149 547h1v1h-1zM152 547h1v1h-1zM154 547h1v1h-1zM156 547h1v1h-1zM147 548h1v1h-1zM149 548h1v1h-1zM154 548h1v1h-1zM156 548h1v1h-1zM146 549h1v1h-1zM150 549h5v1h-5zM158 539h1v1h-1zM161 539h1v1h-1zM163 539h1v1h-1zM165 539h1v1h-1zM159 540h1v1h-1zM161 540h2v1h-2zM165 540h1v1h-1zM158 541h6v1h-6zM165 541h4v1h-4zM160 542h2v1h-2zM164 542h2v1h-2zM167 542h1v1h-1zM159 543h1v1h-1zM161 543h2v1h-2zM165 543h1v1h-1zM167 543h1v1h-1zM158 544h1v1h-1zM161 544h1v1h-1zM163 544h1v1h-1zM165 544h1v1h-1zM167 544h1v1h-1zM158 545h6v1h-6zM165 545h1v1h-1zM167 545h1v1h-1zM160 546h1v1h-1zM162 546h1v1h-1zM165 546h1v1h-1zM167 546h1v1h-1zM159 547h2v1h-2zM162 547h1v1h-1zM166 547h1v1h-1zM161 548h1v1h-1zM165 548h1v1h-1zM167 548h1v1h-1zM158 549h3v1h-3zM162 549h3v1h-3zM168 549h1v1h-1zM172 539h7v1h-7zM172 540h1v1h-1zM178 540h1v1h-1zM172 541h7v1h-7zM172 542h1v1h-1zM178 542h1v1h-1zM170 543h11v1h-11zM172 544h1v1h-1zM175 544h1v1h-1zM178 544h1v1h-1zM172 545h7v1h-7zM172 546h1v1h-1zM175 546h1v1h-1zM178 546h1v1h-1zM171 547h9v1h-9zM175 548h1v1h-1zM170 549h11v1h-11zM222 539h1v1h-1zM223 540h1v1h-1zM218 541h11v1h-11zM221 542h1v1h-1zM225 542h1v1h-1zM221 543h1v1h-1zM225 543h1v1h-1zM221 544h1v1h-1zM225 544h1v1h-1zM222 545h1v1h-1zM224 545h1v1h-1zM222 546h1v1h-1zM224 546h1v1h-1zM223 547h1v1h-1zM221 548h2v1h-2zM224 548h2v1h-2zM218 549h3v1h-3zM226 549h3v1h-3zM233 539h1v1h-1zM237 539h1v1h-1zM233 540h1v1h-1zM235 540h1v1h-1zM237 540h1v1h-1zM232 541h1v1h-1zM235 541h1v1h-1zM237 541h1v1h-1zM232 542h1v1h-1zM234 542h6v1h-6zM231 543h3v1h-3zM237 543h1v1h-1zM230 544h1v1h-1zM232 544h1v1h-1zM237 544h1v1h-1zM232 545h1v1h-1zM234 545h7v1h-7zM232 546h1v1h-1zM237 546h1v1h-1zM232 547h1v1h-1zM237 547h1v1h-1zM232 548h1v1h-1zM237 548h1v1h-1zM232 549h1v1h-1zM237 549h1v1h-1zM245 539h1v1h-1zM245 540h7v1h-7zM245 541h1v1h-1zM250 541h1v1h-1zM244 542h1v1h-1zM246 542h1v1h-1zM249 542h1v1h-1zM243 543h1v1h-1zM247 543h2v1h-2zM247 544h1v1h-1zM245 545h7v1h-7zM242 546h4v1h-4zM251 546h1v1h-1zM245 547h1v1h-1zM251 547h1v1h-1zM245 548h1v1h-1zM251 548h1v1h-1zM245 549h7v1h-7z"/>
</svg>
<!--/TXT-->
</body></html>
